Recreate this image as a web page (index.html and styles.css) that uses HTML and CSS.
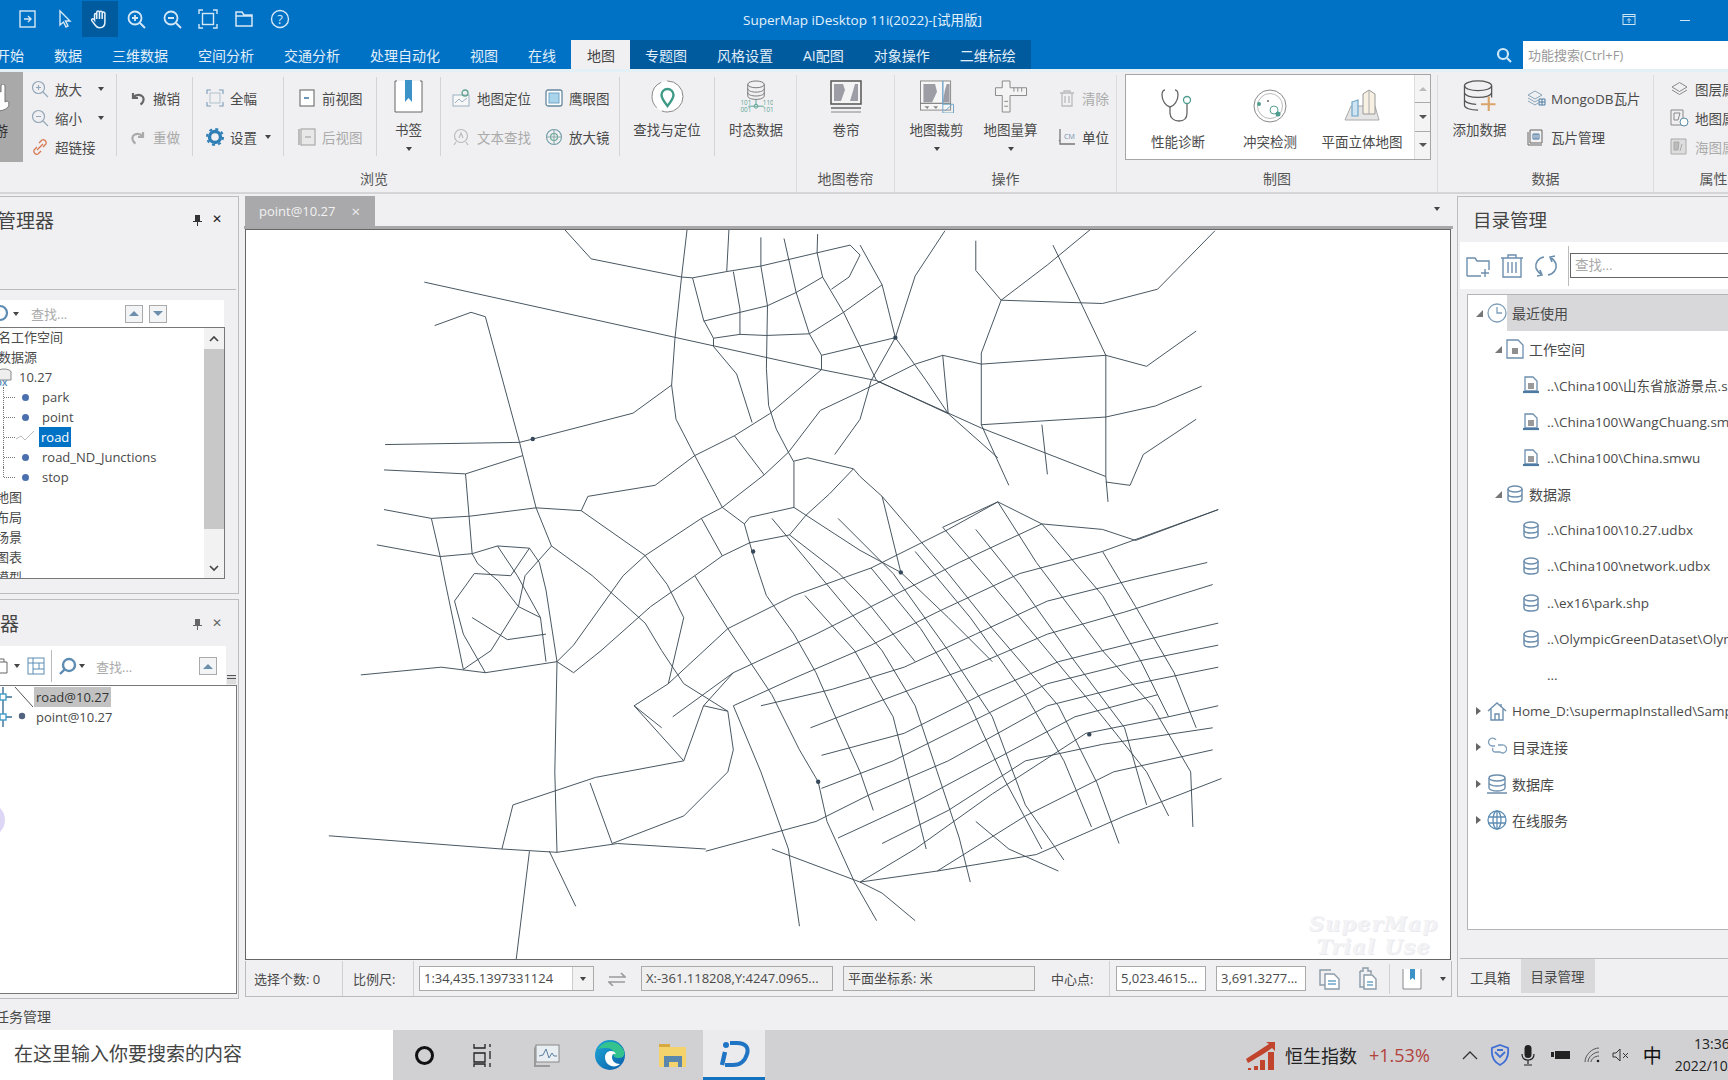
FILE: index.html
```html
<!DOCTYPE html>
<html lang="zh">
<head>
    <meta charset="UTF-8">
    <title>SuperMap iDesktop 11i(2022)</title>
    <link rel="stylesheet" href="styles.css">
</head>
<body>
    <svg class="defs" width="0" height="0">
        <symbol id="db" viewBox="0 0 18 18"><ellipse cx="9" cy="4" rx="7" ry="3" fill="none" stroke="#6d8fae" stroke-width="1.5"/><path d="M2 4v10c0 2 3 3 7 3s7-1 7-3V4M2 9c0 2 3 3 7 3s7-1 7-3" fill="none" stroke="#6d8fae" stroke-width="1.5"/></symbol>
        <symbol id="wfile" viewBox="0 0 18 18"><path d="M3 1h8l4 4v10H3z" fill="#fff" stroke="#6d8fae" stroke-width="1.3"/><rect x="6" y="7" width="6" height="6" fill="#9a9a9a"/><path d="M1 16h16" stroke="#4d7aa3" stroke-width="2.2"/></symbol>
        <symbol id="tri-down" viewBox="0 0 10 10"><path d="M2 3h6L5 7z" fill="#444"/></symbol>
    </svg>

    <div class="titlebar">
        <div class="quick">
            <span class="qbtn"><svg width="22" height="22" viewBox="0 0 22 22" fill="none" stroke="#d6e8f6" stroke-width="1.4"><rect x="3" y="3" width="15" height="16"/><path d="M7 11h7M11 8l3 3-3 3"/></svg></span>
            <span class="qbtn"><svg width="22" height="22" viewBox="0 0 22 22" fill="none" stroke="#d6e8f6" stroke-width="1.4"><path d="M7 3v14l3.500-3 2.500 5 2-1-2.500-5H17z"/></svg></span>
            <span class="qbtn on"><svg width="24" height="24" viewBox="0 0 22 22" fill="none" stroke="#e6f1fa" stroke-width="1.4"><path d="M6 12V7a1 1 0 0 1 2 0V5a1 1 0 0 1 2.500 0a1 1 0 0 1 2.500 0.500a1 1 0 0 1 2.500 1V14c0 3-2 5-5 5-2 0-3-1-4-2.500L3.500 12.500c-.8-1.500 1-2.500 2.500-.5zM8 7v4M10.500 5v6M13 5.500V11"/></svg></span>
            <span class="qbtn"><svg width="22" height="22" viewBox="0 0 22 22" fill="none" stroke="#d6e8f6" stroke-width="1.8"><circle cx="10" cy="10" r="6.500"/><path d="M15 15l5 5M7 10h6M10 7v6"/></svg></span>
            <span class="qbtn"><svg width="22" height="22" viewBox="0 0 22 22" fill="none" stroke="#d6e8f6" stroke-width="1.8"><circle cx="10" cy="10" r="6.500"/><path d="M15 15l5 5M7 10h6"/></svg></span>
            <span class="qbtn"><svg width="22" height="22" viewBox="0 0 22 22" fill="none" stroke="#d6e8f6" stroke-width="1.4"><rect x="5.500" y="5.500" width="11" height="11"/><path d="M2 6V2h4M16 2h4v4M20 16v4h-4M6 20H2v-4"/></svg></span>
            <span class="qbtn"><svg width="22" height="22" viewBox="0 0 22 22" fill="none" stroke="#d6e8f6" stroke-width="1.5"><path d="M3 18V4h6l2 3h8v11zM3 8h16"/></svg></span>
            <span class="qbtn"><svg width="22" height="22" viewBox="0 0 22 22" fill="none" stroke="#d6e8f6" stroke-width="1.4"><circle cx="11" cy="11" r="8.500"/><text x="11" y="15.500" text-anchor="middle" font-size="13" fill="#d6e8f6" stroke="none">?</text></svg></span>
        </div>
        <div class="apptitle">SuperMap iDesktop 11i(2022)-[试用版]</div>
        <div class="winbtns">
            <svg width="14" height="14" viewBox="0 0 14 14" fill="none" stroke="#cfe5f5"><rect x="1" y="1.500" width="12" height="10"/><path d="M1 3.500h12M7 10V6M5 7.500l2-2 2 2"/></svg>
            <span class="minbtn"></span>
        </div>
    </div>

    <div class="tabbar">
        <span class="tab first">开始</span>
        <span class="tab">数据</span>
        <span class="tab">三维数据</span>
        <span class="tab">空间分析</span>
        <span class="tab">交通分析</span>
        <span class="tab">处理自动化</span>
        <span class="tab">视图</span>
        <span class="tab">在线</span>
        <span class="tab active">地图</span>
        <div class="tabs-context">
            <span class="tab">专题图</span>
            <span class="tab">风格设置</span>
            <span class="tab">AI配图</span>
            <span class="tab">对象操作</span>
            <span class="tab">二维标绘</span>
        </div>
        <div class="funcsearch">
            <svg class="fs-icon" width="16" height="16" viewBox="0 0 16 16" fill="none" stroke="#cfe8f8" stroke-width="2.200"><circle cx="7" cy="7" r="5"/><path d="M11 11l4 4"/></svg>
            <span class="fs-input">功能搜索(Ctrl+F)</span>
        </div>
    </div>

    <div class="ribbon">
        <!-- 浏览 -->
        <div class="rgroup g-browse">
            <div class="rbody">
                <div class="rcol c-hand">
                    <div class="handbtn">
                        <svg width="14" height="30" viewBox="0 0 14 30"><path d="M-6 12a2 2 0 0 1 4 0V8a2 2 0 0 1 3 0V2a2 2 0 0 1 4 0v16l2-1c3 0 2 6 0 7-2 2-6 3-10 3s-3 0-3-3z" fill="#fff" stroke="#777"/></svg>
                        <span class="hand-label">漫游</span>
                    </div>
                </div>
                <div class="rcol rows3 c-zoom">
                    <div class="ritem"><svg width="18" height="18" viewBox="0 0 18 18" fill="none" stroke="#93a7b8" stroke-width="1.200"><circle cx="7.500" cy="7.500" r="6"/><path d="M12 12l5 5M5 7.500h5M7.500 5v5"/></svg><span class="lbl">放大</span><svg class="car" width="10" height="10"><use href="#tri-down"/></svg></div>
                    <div class="ritem"><svg width="18" height="18" viewBox="0 0 18 18" fill="none" stroke="#93a7b8" stroke-width="1.200"><circle cx="7.500" cy="7.500" r="6"/><path d="M12 12l5 5M5 7.500h5"/></svg><span class="lbl">缩小</span><svg class="car" width="10" height="10"><use href="#tri-down"/></svg></div>
                    <div class="ritem"><svg width="18" height="18" viewBox="0 0 18 18" fill="none" stroke="#d6764f" stroke-width="1.300"><path d="M8 5l3-3c2-1 5 1 4 4l-3 3M10 13l-3 3c-2 1-5-1-4-4l3-3M6 12l6-6"/></svg><span class="lbl">超链接</span></div>
                </div>
                <div class="rcol rows2 c-undo">
                    <div class="ritem"><svg width="18" height="18" viewBox="0 0 18 18" fill="none" stroke="#666" stroke-width="2.200"><path d="M4 4v5h5M4.500 8.500C7 5 12 5 14 8c1.500 2.500 0 6-2.500 7.500"/></svg><span class="lbl">撤销</span></div>
                    <div class="ritem dis"><svg width="18" height="18" viewBox="0 0 18 18" fill="none" stroke="#aaa" stroke-width="2.200"><path d="M14 4v5H9M13.500 8.500C11 5 6 5 4 8c-1.500 2.500 0 6 2.500 7.500"/></svg><span class="lbl">重做</span></div>
                </div>
                <div class="rcol rows2 c-full">
                    <div class="ritem"><svg width="18" height="18" viewBox="0 0 18 18" fill="none" stroke="#7a9cb8" stroke-width="1.100"><rect x="4" y="4" width="10" height="10" stroke="#b8c6d2"/><path d="M1 5V1h4M13 1h4v4M17 13v4h-4M5 17H1v-4"/></svg><span class="lbl">全幅</span></div>
                    <div class="ritem"><svg width="18" height="18" viewBox="0 0 18 18"><circle cx="9" cy="9" r="5.500" fill="none" stroke="#2f7fb6" stroke-width="3.400"/><circle cx="9" cy="9" r="8" fill="none" stroke="#2f7fb6" stroke-width="2" stroke-dasharray="3 3.300"/></svg><span class="lbl">设置</span><svg class="car" width="10" height="10"><use href="#tri-down"/></svg></div>
                </div>
                <div class="rcol rows2 c-views">
                    <div class="ritem"><svg width="18" height="18" viewBox="0 0 18 18" fill="none" stroke="#777" stroke-width="1.200"><rect x="2" y="1" width="14" height="16" fill="#fff"/><path d="M6 9h5" stroke="#4c7ca3" stroke-width="1.600"/></svg><span class="lbl">前视图</span></div>
                    <div class="ritem dis"><svg width="18" height="18" viewBox="0 0 18 18" fill="none" stroke="#aaa" stroke-width="1.200"><rect x="3" y="1" width="14" height="16" fill="#e8e8e8"/><path d="M1 1v16M7 9h6" stroke="#999"/></svg><span class="lbl">后视图</span></div>
                </div>
                <div class="rcol rlarge c-book">
                    <svg class="bigicon" width="29" height="33" viewBox="0 0 29 33"><path d="M1 1v31h27V1" fill="#fff" stroke="#666"/><path d="M1 1h2M26 1h2" stroke="#666"/><path d="M11 0h7v22l-3.500-4L11 22z" fill="#3d93c7"/></svg>
                    <span class="lbl">书签</span>
                    <svg class="car" width="10" height="10"><use href="#tri-down"/></svg>
                </div>
                <div class="rcol rows2 c-loc">
                    <div class="ritem"><svg width="19" height="18" viewBox="0 0 19 18" fill="none" stroke="#9ab0c0"><rect x="1" y="6" width="16" height="11" fill="#f7f7f7"/><path d="M3 14l4-4 3 3 5-4"/><circle cx="13" cy="4" r="3" stroke="#5fa38f" stroke-width="1.300"/></svg><span class="lbl">地图定位</span></div>
                    <div class="ritem dis"><svg width="19" height="18" viewBox="0 0 19 18" fill="none" stroke="#bbb" stroke-width="1.200"><circle cx="9" cy="8" r="6.500"/><path d="M4 14l-2 3M14 14l2 3M7 10l2-5 2 5"/></svg><span class="lbl">文本查找</span></div>
                </div>
                <div class="rcol rows2 c-eye">
                    <div class="ritem"><svg width="18" height="18" viewBox="0 0 18 18"><rect x="1" y="1" width="16" height="16" rx="2" fill="#fff" stroke="#66879f" stroke-width="1.300"/><rect x="4" y="4" width="10" height="10" fill="#a9d4ec" stroke="#6fa5c7"/></svg><span class="lbl">鹰眼图</span></div>
                    <div class="ritem"><svg width="18" height="18" viewBox="0 0 18 18" fill="none" stroke="#6f9aa8" stroke-width="1.100"><circle cx="9" cy="9" r="7.500"/><circle cx="9" cy="9" r="3.500" stroke="#5fa38f"/><path d="M9 1v16M1 9h16" stroke="#8aa"/></svg><span class="lbl">放大镜</span></div>
                </div>
                <div class="rcol rlarge c-find">
                    <svg class="bigicon" width="35" height="33" viewBox="0 0 35 33"><circle cx="17.500" cy="16.500" r="15.500" fill="#fff" stroke="#888" stroke-dasharray="30 6"/><path d="M17.500 26c-4-5-6-8-6-11a6 6 0 0 1 12 0c0 3-2 6-6 11z" fill="none" stroke="#3e9a86" stroke-width="2.400"/></svg>
                    <span class="lbl">查找与定位</span>
                </div>
                <div class="rcol rlarge c-time last">
                    <svg class="bigicon" width="34" height="34" viewBox="0 0 34 34" fill="none"><ellipse cx="17" cy="4.500" rx="8.500" ry="3.500" stroke="#777"/><path d="M8.500 4.500v12c0 2 4 3.500 8.500 3.500s8.500-1.500 8.500-3.500v-12M8.500 9c0 2 4 3.500 8.500 3.500s8.500-1.500 8.500-3.500M8.500 13c0 2 4 3.500 8.500 3.500s8.500-1.500 8.500-3.500" stroke="#777"/><path d="M17 20v5M9 27h16" stroke="#5aa394"/><circle cx="17" cy="27" r="2" stroke="#5aa394"/><text x="1" y="26" font-size="6.500" fill="#5aa394">101</text><text x="24" y="26" font-size="6.500" fill="#5aa394">110</text><text x="1" y="33" font-size="6.500" fill="#5aa394">001</text><text x="24" y="33" font-size="6.500" fill="#5aa394">101</text></svg>
                    <span class="lbl">时态数据</span>
                </div>
            </div>
            <div class="rlabel">浏览</div>
        </div>

        <!-- 地图卷帘 -->
        <div class="rgroup g-swipe">
            <div class="rbody">
                <div class="rcol rlarge c-swipe last">
                    <svg class="bigicon" width="32" height="33" viewBox="0 0 32 33"><rect x="1" y="1" width="30" height="23" fill="#f4f4f4" stroke="#555" stroke-width="1.500"/><path d="M4 4h9l2 6-4 11H4zM20 21l3-10 2-7h3v17z" fill="#9d9da6"/><path d="M1 28h30" stroke="#666" stroke-width="1.500"/><path d="M1 32h30" stroke="#aaa" stroke-width="1.500"/></svg>
                    <span class="lbl">卷帘</span>
                </div>
            </div>
            <div class="rlabel">地图卷帘</div>
        </div>

        <!-- 操作 -->
        <div class="rgroup g-oper">
            <div class="rbody">
                <div class="rcol rlarge c-clip">
                    <svg class="bigicon" width="36" height="34" viewBox="0 0 36 34"><rect x="1" y="1" width="31" height="30" fill="#f6f6f6" stroke="#888"/><path d="M4 4h12l2 8-5 11H4zM24 23l2-12 2-7h3v19z" fill="#9d9da6"/><path d="M1 24h31" stroke="#666"/><path d="M5 27h5l-2 3zM14 27h5l-2 3z" fill="#888"/><path d="M24 1v24h11v9H24z" fill="none" stroke="#6fa5c7"/><path d="M26 32l7-6" stroke="#6fa5c7"/></svg>
                    <span class="lbl">地图裁剪</span>
                    <svg class="car" width="10" height="10"><use href="#tri-down"/></svg>
                </div>
                <div class="rcol rlarge c-measure">
                    <svg class="bigicon" width="34" height="34" viewBox="0 0 34 34" fill="#f4f4f4" stroke="#888"><path d="M8 1h8v7h17v8H16v17H8V16H1V8h7z"/><path d="M20 8v4M24 8v4M28 8v4M10 22h4M10 27h4" fill="none"/></svg>
                    <span class="lbl">地图量算</span>
                    <svg class="car" width="10" height="10"><use href="#tri-down"/></svg>
                </div>
                <div class="rcol rows2 c-clear last">
                    <div class="ritem dis"><svg width="18" height="18" viewBox="0 0 18 18" fill="none" stroke="#bbb" stroke-width="1.300"><path d="M2 4h14M6 4V2h6v2M4 4v13h10V4M7 7v7M11 7v7"/></svg><span class="lbl">清除</span></div>
                    <div class="ritem"><svg width="18" height="18" viewBox="0 0 18 18" fill="none" stroke="#777"><path d="M2 1v15h15M2 12l-1 1" stroke-width="1.300"/><text x="6" y="11" font-size="7" fill="#6d8fae" stroke="none">CM</text></svg><span class="lbl">单位</span></div>
                </div>
            </div>
            <div class="rlabel">操作</div>
        </div>

        <!-- 制图 -->
        <div class="rgroup g-carto">
            <div class="rbody">
                <div class="gallery">
                    <div class="gal-item">
                        <svg width="36" height="36" viewBox="0 0 36 36" fill="none" stroke="#666" stroke-width="1.300"><path d="M5 2c-2 0-3 2-3 5 0 6 4 11 8 12 4-1 8-6 8-12 0-3-1-5-3-5"/><path d="M10 19v6c0 5 4 8 9 8s8-3 8-8v-9"/><circle cx="27" cy="12" r="3.500" stroke="#4f9d8f"/></svg>
                        <span>性能诊断</span>
                    </div>
                    <div class="gal-item">
                        <svg width="36" height="36" viewBox="0 0 36 36" fill="none" stroke="#888"><circle cx="18" cy="18" r="16"/><circle cx="18" cy="18" r="12.500" stroke="#bbb"/><circle cx="22" cy="22" r="4" stroke="#5aa394"/><circle cx="7" cy="16" r="2" fill="#4f9d8f" stroke="none"/><circle cx="26" cy="26" r="2.500" fill="#4f9d8f" stroke="none"/><circle cx="16" cy="13" r="1" fill="#666" stroke="none"/></svg>
                        <span>冲突检测</span>
                    </div>
                    <div class="gal-item">
                        <svg width="36" height="36" viewBox="0 0 36 36" fill="none" stroke="#aaa"><path d="M1 32l6-14h24l4 14z" fill="#e5e5e5"/><path d="M8 14l6-2v16H8z" fill="#cfe5f3" stroke="#6fa5c7" stroke-width="1.200"/><path d="M19 6l6-4 6 4v20H19z" fill="#f7f0e3" stroke="#999"/><path d="M25 2v24"/></svg>
                        <span>平面立体地图</span>
                    </div>
                    <div class="gal-scroll">
                        <span class="gs up"><i></i></span>
                        <span class="gs down"><i></i></span>
                        <span class="gs more"><i></i></span>
                    </div>
                </div>
            </div>
            <div class="rlabel">制图</div>
        </div>

        <!-- 数据 -->
        <div class="rgroup g-data">
            <div class="rbody">
                <div class="rcol rlarge c-add">
                    <svg class="bigicon" width="36" height="34" viewBox="0 0 36 34" fill="none" stroke="#555" stroke-width="1.300"><ellipse cx="16" cy="6" rx="14" ry="5"/><path d="M2 6v20c0 3 6 5 14 5M30 6v12M2 13c0 3 6 5 14 5s14-2 14-5M2 20c0 3 6 5 12 5"/><path d="M27 17v15M19 25h15" stroke="#d9a36a" stroke-width="2.200"/></svg>
                    <span class="lbl">添加数据</span>
                </div>
                <div class="rcol rows2 c-tile last">
                    <div class="ritem"><svg width="19" height="18" viewBox="0 0 19 18" fill="none" stroke="#8aa5ba"><path d="M1 6l7-4 7 4-7 4zM1 9l7 4 3-2M1 12l7 4 3-2"/><path d="M12 10h6v6h-6zM15 10v6M12 13h6" stroke="#4d7aa3"/></svg><span class="lbl">MongoDB瓦片</span></div>
                    <div class="ritem"><svg width="19" height="18" viewBox="0 0 19 18" fill="none" stroke="#666"><path d="M3 2h12v13H3zM1 4v13h14"/><path d="M6 6h6v5H6z" stroke="#4d7aa3"/><path d="M8 6v5M10 6v5" stroke="#4d7aa3"/></svg><span class="lbl">瓦片管理</span></div>
                </div>
            </div>
            <div class="rlabel">数据</div>
        </div>

        <!-- 属性 -->
        <div class="rgroup g-prop">
            <div class="rbody">
                <div class="rcol rows3 c-prop">
                    <div class="ritem"><svg width="19" height="18" viewBox="0 0 19 18" fill="none" stroke="#888"><path d="M2 7l7.500-4.500L17 7l-7.500 4.500zM2 10l7.500 4.500L17 10"/></svg><span class="lbl">图层属性</span></div>
                    <div class="ritem"><svg width="19" height="18" viewBox="0 0 19 18" fill="none" stroke="#888"><path d="M1 1h12v15H1zM4 4h6l-2 7H4z"/><circle cx="14" cy="13" r="4" fill="#fff" stroke="#5a8ca8"/></svg><span class="lbl">地图属性</span></div>
                    <div class="ritem dis"><svg width="19" height="18" viewBox="0 0 19 18" fill="#ddd" stroke="#aaa"><path d="M1 1h15v15H1z"/><path d="M4 4h5l-1 8H4zM12 6l-2 7" fill="#bbb"/></svg><span class="lbl">海图属性</span></div>
                </div>
            </div>
            <div class="rlabel">属性</div>
        </div>
    </div>

    <div class="workspace">
        <div class="leftcol">
            <div class="panel p-workspace">
                <div class="panel-head">
                    <span class="panel-title wm-title">工作空间管理器</span>
                    <span class="pin"><svg width="11" height="12" viewBox="0 0 11 12" fill="#333"><path d="M3 1h5v6h2v1H6v4H5V8H1V7h2z"/></svg></span>
                    <span class="close">✕</span>
                </div>
                <div class="mini-toolbar wm-tools">
                    <svg class="cut-ic" width="10" height="20" viewBox="0 0 10 20" fill="none" stroke="#5d8cb3" stroke-width="2.200"><circle cx="0" cy="9" r="7"/></svg>
                    <svg class="tool-car" width="10" height="10"><use href="#tri-down"/></svg>
                    <span class="find-hint">查找...</span>
                    <span class="arrowbtn"><i class="up"></i></span>
                    <span class="arrowbtn"><i class="dn"></i></span>
                </div>
                <div class="treebox wm-tree">
                    <div class="treerows">
                        <div class="trow clip28">未命名工作空间</div>
                        <div class="trow clip2">数据源</div>
                        <div class="trow ds"><svg class="ds-ic" width="20" height="20" viewBox="0 0 20 20"><ellipse cx="6" cy="5" rx="7" ry="3" fill="#eee" stroke="#888"/><path d="M-1 5v8h14V5" fill="#eee" stroke="#888"/><text x="-2" y="19" font-size="8" font-weight="bold" fill="#5d8cb3">DX</text></svg>10.27</div>
                        <div class="trow child"><i class="dots"></i><i class="bullet"></i>park</div>
                        <div class="trow child"><i class="dots"></i><i class="bullet"></i>point</div>
                        <div class="trow child"><i class="dots"></i><svg class="line-ic" width="20" height="14" viewBox="0 0 20 14" fill="none" stroke="#bbb"><path d="M0 9l5-3 4 4 9-9"/></svg><span class="sel">road</span></div>
                        <div class="trow child"><i class="dots"></i><i class="bullet"></i>road_ND_Junctions</div>
                        <div class="trow child"><i class="dots end"></i><i class="bullet"></i>stop</div>
                        <div class="trow clip14">地图</div>
                        <div class="trow clip14">布局</div>
                        <div class="trow clip14">场景</div>
                        <div class="trow clip14">图表</div>
                        <div class="trow clip14">模型</div>
                    </div>
                    <div class="vscroll">
                        <span class="chev"><svg width="12" height="8" viewBox="0 0 12 8" fill="none" stroke="#444" stroke-width="1.600"><path d="M2 6l4-4 4 4"/></svg></span>
                        <span class="thumb"></span>
                        <span class="chev"><svg width="12" height="8" viewBox="0 0 12 8" fill="none" stroke="#444" stroke-width="1.600"><path d="M2 2l4 4 4-4"/></svg></span>
                    </div>
                </div>
            </div>
            <div class="panel p-layers">
                <div class="panel-head short">
                    <span class="panel-title lm-title">图层管理器</span>
                    <span class="pin dim"><svg width="11" height="12" viewBox="0 0 11 12" fill="#666"><path d="M3 1h5v6h2v1H6v4H5V8H1V7h2z"/></svg></span>
                    <span class="close dim">✕</span>
                </div>
                <div class="mini-toolbar lm-tools">
                    <svg class="doc-ic" width="9" height="18" viewBox="0 0 9 18" fill="none" stroke="#666"><path d="M-3 5h10v11H-3zM0 2h4v3"/></svg>
                    <svg class="tool-car" width="10" height="10"><use href="#tri-down"/></svg>
                    <svg class="grid-ic" width="18" height="18" viewBox="0 0 18 18" fill="none" stroke="#5d8cb3"><rect x="1" y="1" width="16" height="16"/><path d="M1 6h16M6 1v16M6 12h11M12 6v6"/></svg>
                    <i class="tool-sep"></i>
                    <svg class="lens-ic" width="19" height="19" viewBox="0 0 19 19" fill="none" stroke="#5d8cb3" stroke-width="2.400"><circle cx="11" cy="8" r="6"/><path d="M6.500 12.500L2 17"/></svg>
                    <svg class="tool-car" width="10" height="10"><use href="#tri-down"/></svg>
                    <span class="find-hint">查找...</span>
                    <span class="arrowbtn"><i class="up"></i></span>
                    <span class="overflow-btn"></span>
                </div>
                <div class="treebox lm-tree">
                    <div class="layer-row"><svg class="crosshair" width="14" height="20" viewBox="0 0 14 20" fill="none" stroke="#3b6f95" stroke-width="1.400"><path d="M3 0v20M-4 10h16"/><rect x="0" y="7" width="6" height="6" stroke="#3f9bc8" fill="#fff"/></svg><svg class="lineswatch" width="20" height="20" viewBox="0 0 20 20" stroke="#555"><path d="M1 0l18 20"/></svg><span class="hl">road@10.27</span></div>
                    <div class="layer-row"><svg class="crosshair" width="14" height="20" viewBox="0 0 14 20" fill="none" stroke="#3b6f95" stroke-width="1.400"><path d="M3 0v20M-4 10h16"/><rect x="0" y="7" width="6" height="6" stroke="#3f9bc8" fill="#fff"/></svg><svg class="lineswatch" width="20" height="20" viewBox="0 0 20 20"><circle cx="8" cy="9" r="3.200" fill="#52637f"/></svg><span class="pad">point@10.27</span></div>
                    <span class="float-ball"></span>
                </div>
            </div>
        </div>

        <div class="doccol">
            <div class="doctabs">
                <span class="doctab">point@10.27<span class="x">×</span></span>
                <svg class="doc-car" width="10" height="10"><use href="#tri-down"/></svg>
            </div>
            <div class="map">
                <svg class="roads" width="1204" height="729" viewBox="222.800 208.300 1092.500 661.500">
                    <path fill="none" stroke="#3c4b56" stroke-width="0.850" d="
                    M384.600 255.600L745 335L795 345L890 388L1003 432
                    M394 295L427 283L440 287L471 401L474 413L486 460.400L500 495L537 522L585 565L600 590L620 620L660 645
                    M349 403L471 401L483 398L574 374.500L609 349
                    M623 208L618 251L612 307L609 349L613 380L630 413L655 460L675 475L682 500L689 522L695 540L720 575L740 610L762 660L780 700L792 735
                    M512 208L536 234.500L618 251L628 251.700L659 246L690 241L741 229L771 222L780 231L770 251L754 262
                    M661 208L659 246
                    M690 215L690 241L696 277L695 334L697 367.500L704 389L715 410L720 419L720 460
                    M628 251.700L638 290L647 306.500L647 314L668 339L682 383
                    M665 246L671 280L671 303
                    M638 291L696 277L722 265L746 251
                    M647 306.500L671 303L695 304L734 302.500
                    M711 216L722 265L734 302.500L745 322L745 335L698 375L666 395L630 413L594 440L533 450L527 463L486 460.400L426 468L391 470L348 462
                    M741.500 212L741 229L746 251L765 283L795 345L860 375L905 415
                    M734 302.500L765 283L800 258
                    M745 322L812 306
                    M780 355L744 372L715 410L693 430.500L655 460L636 470L585 503.700L565 522L520 585L505 600
                    M666 395L693 430.500
                    M348 426L422 429.600L474 413
                    M422 429.600L428 502L433 511L452 527L470 550L490 560L495 600
                    M341.500 494L399 504.600L428 502L451 495L480 497L489 510L495 535L505 600
                    M391 470L399 504.600L403 525L420 607
                    M527 463L585 503.700L605 530L620 560L606 620L575 640L600 660
                    M500 495L476 522L470 550L445 590L420 607
                    M451 495L469 522L490 560
                    M480 497L463 522L430 520L412 545L420 575L440 610
                    M428 560L460 580L495 575
                    M720 418L732.500 415L774 425L780 432L800 450L817 519
                    M774 425L752 448L731 467L716 485L680 492L655 504L630 522L590 550L545 590L520 610L505 600L503 700L505 773
                    M675 475L680 469L720 460L780 499L817 519L860 560L900 600
                    M636 470L655 504
                    M716 485L760 519L790 550L830 600
                    M780 355L830 330L855 322L890 330L1003 322L1040 332L1085 300
                    M780 222L800 258L812 306L840 345L860 375L855 322
                    M857 209L830 250L812 306L790 345L780 380L757 412
                    M885 218L885 245L908 272L890 320L890 385L915 440
                    M955 222L975 263L1003 322L1003 378L1003 432L1005 455
                    M1102 209L1050 262L1000 275L908 272
                    M990 207L950 240L908 272
                    M1090 350L1048 368L1003 378L890 385
                    M1085 380L1037 412L1025 440L1003 437
                    M945 385L950 430
                    M905 455L945 475L1000 480L1030 490L1105 462
                    M855 478L905 455
                    M606 620L660 570L720 540L790 515L860 480L905 455
                    M610 650L665 610L740 575L800 545L870 510L945 475
                    M665 640L720 615L790 585L850 555L925 520L1000 500L1105 462
                    M690 640L755 625L820 605L885 575L950 545L1030 525L1095 510
                    M735 660L800 635L880 605L950 575L1020 555L1100 530
                    M745 685L820 665L890 630L960 600L1040 580L1105 565
                    M745 715L810 690L880 655L950 620L1030 600L1105 585
                    M640 772L740 745L790 720L860 690L950 640L1030 620L1105 605
                    M760 760L825 730L900 690L975 650L1050 630
                    M780 800L830 770L900 720L985 665L1060 650L1105 640
                    M800 765L860 735L930 690L1000 675L1100 660
                    M780 800L850 790L930 740L1010 700L1100 680
                    M850 790L940 775L1020 740L1108 706
                    M700 470L750 530L800 590L830 640L850 700L870 760L880 800
                    M730 540L775 590L810 650L825 710L840 770
                    M760 470L810 520L860 590L900 650L930 730L965 780
                    M790 515L835 570L880 640L910 705L945 770
                    M800 450L860 520L900 570L960 640L995 710L1015 765
                    M830 500L880 560L930 630L965 690L990 750
                    M855 478L900 530L950 590L1000 650L1040 700L1060 740
                    M885 480L925 530L975 600L1020 660L1040 730
                    M905 455L940 510L1000 590L1045 640L1080 700L1082 750
                    M945 475L1000 540L1035 600L1060 650
                    M1000 500L1030 550L1065 610L1085 660
                    M630 522L660 570L680 600L700 630L725 680L742 709L750 745L775 800L795 835
                    M665 640L690 700L715 770L725 840
                    M298 758L455 770L465 730L540 705L620 690L638 640L665 610
                    M455 770L505 773L560 765L640 770
                    M535 710L555 765
                    M480 772L468 870
                    M498 772L522 822
                    M327 612L400 605L440 610L505 600
                    M575 640L620 690
                    M638 640L660 645L665 680L660 700L620 740L555 765
                    M700 770L780 800L800 810L830 835
                    M885 745L915 770L960 790
                    "/>
                    <g fill="#35495a">
                        <circle cx="483" cy="398" r="2"/>
                        <circle cx="812" cy="306" r="2"/>
                        <circle cx="683" cy="500" r="2"/>
                        <circle cx="817" cy="519" r="2"/>
                        <circle cx="988" cy="666" r="2"/>
                        <circle cx="742" cy="709" r="2"/>
                    </g>
                </svg>
                <div class="watermark">SuperMap<br>Trial Use</div>
            </div>
            <div class="statusbar">
                <span class="st-cell st-count">选择个数: 0</span>
                <span class="st-cell st-scale">比例尺:</span>
                <span class="combo"><span class="combo-text">1:34,435.1397331124</span><span class="combo-btn"><svg width="10" height="10"><use href="#tri-down"/></svg></span></span>
                <svg class="swap" width="18" height="14" viewBox="0 0 18 14" fill="none" stroke="#999" stroke-width="1.600"><path d="M1 5h16l-4-4M17 10H1l4 4"/></svg>
                <span class="field f-coord">X:-361.118208,Y:4247.0965...</span>
                <span class="field f-crs">平面坐标系: 米</span>
                <span class="st-cell st-center">中心点:</span>
                <span class="field f-num f-x">5,023.4615...</span>
                <span class="field f-num f-y">3,691.3277...</span>
                <svg class="st-ic copy" width="24" height="24" viewBox="0 0 24 24" fill="none" stroke="#8a9aa8" stroke-width="1.400"><path d="M14 3H3v15h5"/><path d="M8 7h9l5 5v10H8z" fill="#fff"/><path d="M11 14h8M11 17h8" stroke="#6fa5c7"/></svg>
                <svg class="st-ic paste" width="24" height="24" viewBox="0 0 24 24" fill="none" stroke="#8a9aa8" stroke-width="1.400"><path d="M6 4h3V1h5v3h3v3M6 4v16h4"/><path d="M10 8h8l4 4v10H10z" fill="#fff"/><path d="M13 15h6M13 18h6" stroke="#6fa5c7"/></svg>
                <i class="st-sep"></i>
                <svg class="st-ic mark" width="20" height="22" viewBox="0 0 20 22"><path d="M1 1v20h18V1" fill="#fff" stroke="#888"/><path d="M8 1h5v11l-2.500-2L8 12z" fill="#3d93c7"/></svg>
                <svg class="st-car" width="10" height="10"><use href="#tri-down"/></svg>
            </div>
        </div>

        <div class="rightcol">
            <div class="panel-title cat-title">目录管理</div>
            <div class="cat-tools">
                <svg width="24" height="24" viewBox="0 0 24 24" fill="none" stroke="#6d8fae" stroke-width="1.400"><path d="M1 22V4h8l2 3h12v9M1 22h14M19 15v8M15 19h8"/></svg>
                <svg width="24" height="24" viewBox="0 0 24 24" fill="none" stroke="#6d8fae" stroke-width="1.400"><path d="M1 4h22M8 4V1h8v3M3 4v19h18V4M8 8v11M12 8v11M16 8v11"/></svg>
                <svg width="24" height="24" viewBox="0 0 24 24" fill="none" stroke="#6d8fae" stroke-width="1.600"><path d="M10 3C4 4 1 9 2 14c1 3 3 5 6 7M6 16l2 5-5 1M14 21c6-1 9-6 8-11-1-3-3-5-6-7M18 8l-2-5 5-1"/></svg>
                <i class="cat-sep"></i>
                <span class="cat-search">查找...</span>
            </div>
            <div class="cat-tree">
                <div class="crow top hl-row"><i class="tw open"></i><svg width="20" height="20" viewBox="0 0 20 20" fill="none" stroke="#7f9fba" stroke-width="1.300"><circle cx="10" cy="10" r="9"/><path d="M10 4v6h5"/></svg><span class="big">最近使用</span></div>
                <div class="crow l2"><i class="tw open"></i><svg width="18" height="20" viewBox="0 0 18 20" fill="none" stroke="#6d8fae" stroke-width="1.300"><path d="M1 1h11l5 5v13H1z"/><rect x="6" y="9" width="6" height="6" fill="#8f8f8f" stroke="none"/></svg><span class="big">工作空间</span></div>
                <div class="crow l3"><svg width="18" height="18"><use href="#wfile"/></svg><span>..\China100\山东省旅游景点.smwu</span></div>
                <div class="crow l3"><svg width="18" height="18"><use href="#wfile"/></svg><span>..\China100\WangChuang.smwu</span></div>
                <div class="crow l3"><svg width="18" height="18"><use href="#wfile"/></svg><span>..\China100\China.smwu</span></div>
                <div class="crow l2"><i class="tw open"></i><svg width="18" height="18"><use href="#db"/></svg><span class="big">数据源</span></div>
                <div class="crow l3"><svg width="18" height="18"><use href="#db"/></svg><span>..\China100\10.27.udbx</span></div>
                <div class="crow l3"><svg width="18" height="18"><use href="#db"/></svg><span>..\China100\network.udbx</span></div>
                <div class="crow l3"><svg width="18" height="18"><use href="#db"/></svg><span>..\ex16\park.shp</span></div>
                <div class="crow l3"><svg width="18" height="18"><use href="#db"/></svg><span>..\OlympicGreenDataset\OlympicGreen.udbx</span></div>
                <div class="crow l3 more"><span>...</span></div>
                <div class="crow top"><i class="tw"></i><svg width="20" height="20" viewBox="0 0 20 20" fill="none" stroke="#6d8fae" stroke-width="1.400"><path d="M1 10l9-8 9 8M4 8v11h12V8M8 19v-6h4v6"/><path d="M14 3v3" /></svg><span>Home_D:\supermapInstalled\SampleData</span></div>
                <div class="crow top"><i class="tw"></i><svg width="20" height="20" viewBox="0 0 20 20" fill="none" stroke="#7f9fba" stroke-width="1.300"><path d="M9 3a4 4 0 1 0-4 6h3M11 8h4a4 4 0 1 1-2 7H8c-2 0-3-2-2-4"/></svg><span class="big">目录连接</span></div>
                <div class="crow top"><i class="tw"></i><svg width="20" height="20" viewBox="0 0 20 20" fill="none" stroke="#6d8fae" stroke-width="1.400"><ellipse cx="10" cy="4" rx="8" ry="3"/><path d="M2 4v10c0 1.500 4 3 8 3s8-1.500 8-3V4M2 9c0 1.500 4 3 8 3s8-1.500 8-3M0 19h20"/></svg><span class="big">数据库</span></div>
                <div class="crow top"><i class="tw"></i><svg width="20" height="20" viewBox="0 0 20 20" fill="none" stroke="#5d8cb3" stroke-width="1.300"><circle cx="10" cy="10" r="9"/><ellipse cx="10" cy="10" rx="4" ry="9"/><path d="M1 7h18M1 13h18M10 1v18"/></svg><span class="big">在线服务</span></div>
            </div>
            <div class="cat-bottom">
                <span class="btab">工具箱</span>
                <span class="btab on">目录管理</span>
            </div>
        </div>
    </div>

    <div class="taskmgr"><span>任务管理</span></div>

    <div class="taskbar">
        <div class="ts-search">在这里输入你要搜索的内容</div>
        <span class="ts-cortana"></span>
        <svg class="ts-view" width="20" height="24" viewBox="0 0 20 24" fill="none" stroke="#222" stroke-width="1.300"><path d="M1 1v4h11V1M1 10h11v9H1zM1 24v-3h11v3M17 1v3M17 8v8M17 20v4"/></svg>
        <svg class="ts-mon" width="28" height="26" viewBox="0 0 28 26"><rect x="3" y="3" width="23" height="17" fill="#e9eef2" stroke="#8a8a8a"/><path d="M6 14l4-1 3-6 3 9 3-5 2 3h3" fill="none" stroke="#5a7fa0"/><path d="M1 6l2-3v20h14v2H1z" fill="#9a9a9a"/></svg>
        <svg class="ts-edge" width="32" height="32" viewBox="0 0 32 32"><defs><linearGradient id="eg" x1="0" y1="0" x2="1" y2="1"><stop offset="0" stop-color="#1fa7d8"/><stop offset="1" stop-color="#0b5ea8"/></linearGradient></defs><circle cx="16" cy="16" r="15" fill="url(#eg)"/><path d="M4 10C9 1 24-1 30 12c1 5-1 7-6 7-6 0-4-4-5-7-3-4-10-3-15-2z" fill="#34c28f"/><path d="M11 18c0-7 9-8 11-3-2-1-4 0-4 3 0 4 3 7 8 7-5 5-15 2-15-7z" fill="#fff"/></svg>
        <svg class="ts-folder" width="29" height="26" viewBox="0 0 29 26"><path d="M1 2h11v3H1z" fill="#d8a93f"/><path d="M1 5h27v20H1z" fill="#f4d36c"/><path d="M6 14h18v11h-4v-5h-9v5H6z" fill="#5c87ad"/></svg>
        <div class="ts-active"><svg width="34" height="30" viewBox="0 0 34 30" fill="none" stroke="#1f74c4" stroke-width="4"><path d="M13 4h7c9 0 12 5 10 11-2 7-7 11-14 11h-8"/><path d="M8 13l-3 13" stroke-width="4.400"/><circle cx="9" cy="6" r="3" fill="#1f74c4" stroke="none"/></svg></div>
        <div class="ts-tray">
            <svg class="tr-chart" width="30" height="30" viewBox="0 0 30 30"><path d="M1 19C7 15 15 10 24 4l-3-2h9v9l-3-3C20 13 10 19 3 23z" fill="#c0452c"/><path d="M3 28h3v2H3zM9 26h4v4H9zM15 20h5v10h-5zM23 12h6v18h-6z" fill="#c0452c"/></svg>
            <span class="tr-name">恒生指数</span>
            <span class="tr-pct">+1.53%</span>
            <svg class="tr-caret" width="16" height="10" viewBox="0 0 16 10" fill="none" stroke="#333" stroke-width="1.300"><path d="M1 9l7-7 7 7"/></svg>
            <svg class="tr-shield" width="20" height="22" viewBox="0 0 20 22" fill="none" stroke="#3f6fd6" stroke-width="1.800"><path d="M10 1l8 3c1 8-2 14-8 17C4 18 1 12 2 4z"/><path d="M5 8l5 5 5-5M7 6h6"/></svg>
            <svg class="tr-mic" width="14" height="22" viewBox="0 0 14 22"><rect x="3.500" y="1" width="7" height="13" rx="3.500" fill="#222"/><path d="M1 10c0 4 2 6 6 6s6-2 6-6M7 16v4M3 21h8" fill="none" stroke="#222" stroke-width="1.200"/></svg>
            <svg class="tr-bat" width="21" height="12" viewBox="0 0 21 12"><path d="M1 3h3v5H1z" fill="#222"/><rect x="5" y="2" width="15" height="8" fill="#222"/></svg>
            <svg class="tr-wifi" width="16" height="16" viewBox="0 0 16 16" fill="none" stroke="#555"><path d="M1 15C1 8 8 1 15 1M4 15c0-5 6-10 11-10M7 15c0-3 4-6 8-6"/><circle cx="14" cy="14" r="1.300" fill="#222" stroke="none"/></svg>
            <svg class="tr-vol" width="18" height="14" viewBox="0 0 18 14" fill="none" stroke="#333"><path d="M1 5h3l4-4v12L4 9H1zM11 5l5 5M16 5l-5 5"/></svg>
            <span class="tr-ime">中</span>
            <div class="tr-clock"><span>13:36</span><span>2022/10/27</span></div>
        </div>
    </div>
</body>
</html>
```

FILE: styles.css
```css
html, body { margin: 0; padding: 0; }
body {
    width: 1728px;
    height: 1080px;
    overflow: hidden;
    display: flex;
    flex-direction: column;
    background: #f0f0f2;
    color: #4a4a4a;
    font-family: "Open Sans", "Noto Sans CJK SC", sans-serif;
    font-size: 13.500px;
}
.defs { position: absolute; }
svg { flex: none; display: block; }
i { display: block; flex: none; }

/* title bar */
.titlebar {
    height: 40px;
    background: #0072c6;
    display: flex;
    align-items: center;
    position: relative;
    flex: none;
}
.quick { display: flex; margin-left: 10px; margin-top: -3px; }
.qbtn { width: 36px; height: 36px; display: flex; align-items: center; justify-content: center; }
.qbtn.on { background: #005a9e; }
.apptitle {
    position: absolute;
    left: 743px;
    top: 9px;
    color: #e4f1fb;
    font-size: 13.500px;
}
.winbtns { margin-left: auto; display: flex; align-items: center; margin-right: 38px; }
.minbtn { display: block; width: 10px; height: 1px; background: #cfe5f5; margin-left: 44px; }

/* tabs */
.tabbar {
    height: 29px;
    background: #0072c6;
    display: flex;
    flex: none;
    color: #e2eff9;
    font-size: 14px;
}
.tab { padding: 0 15px; line-height: 31px; white-space: nowrap; flex: none; }
.tab.first { margin-left: -19px; }
.tab.active { background: #f0f0f2; color: #444; height: 32px; padding: 0 16px; width: 27px; }
.tabs-context { display: flex; background: #005a9e; width: 401px; }
.funcsearch { display: flex; margin-left: auto; align-items: center; }
.fs-icon { margin-right: 11px; margin-top: 1px; }
.fs-input {
    width: 200px;
    height: 28px;
    margin-top: 1px;
    padding-left: 5px;
    line-height: 28px;
    background: #fff;
    color: #999;
    font-size: 13px;
}

/* ribbon */
.ribbon {
    height: 124px;
    flex: none;
    display: flex;
    background: #f0f0f2;
    border-top: 3px solid #e3f0f5;
    box-sizing: border-box;
    border-bottom: 1px solid #d6d6d8;
    font-size: 13.500px;
}
.rgroup { display: flex; flex-direction: column; flex: none; box-sizing: border-box; border-right: 1px solid #dcdcde; margin-top: 3px; }
.rbody { display: flex; height: 79px; margin-top: 2px; }
.rlabel { text-align: center; margin-top: 13px; line-height: 20px; color: #555; font-size: 14px; }
.rcol { display: flex; flex-direction: column; flex: none; box-sizing: border-box; border-right: 1px solid #d4d4d6; }
.rcol.last { border-right: 0; }
.rows2 { padding-top: 1px; }
.rows2 .ritem { height: 39px; }
.rows3 { margin-top: -3px; }
.rows3 .ritem { height: 29px; }
.ritem { display: flex; align-items: center; white-space: nowrap; flex: none; }
.ritem > svg:first-child { margin-right: 6px; }
.ritem .car { margin-left: 6px; }
.dis { color: #aaa; }
.rlarge { align-items: center; padding-top: 3px; }
.rlarge .bigicon { height: 33px; margin-bottom: 7px; }
.rlarge .lbl { line-height: 20px; white-space: nowrap; }
.rlarge .car { margin-top: 4px; }

.g-browse { margin-left: -48px; width: 845px; }
.g-swipe { width: 98px; }
.g-oper { width: 222px; }
.g-carto { width: 321px; }
.g-data { width: 216px; }
.g-prop { width: 120px; }

.c-hand { width: 71px; border-right: 0; }
.handbtn { width: 71px; height: 90px; margin-top: -5px; background: #a9a9a9; position: relative; overflow: hidden; flex: none; }
.handbtn svg { position: absolute; left: 48px; top: 12px; }
.hand-label { position: absolute; left: 29px; top: 48px; color: #333; white-space: nowrap; }
.c-zoom { width: 94px; padding-left: 8px; }
.c-zoom .car { margin-left: 14px; }
.c-undo { width: 76px; padding-left: 12px; }
.c-full { width: 91px; padding-left: 13px; }
.c-views { width: 93px; padding-left: 14px; }
.c-book { width: 64px; }
.c-loc { width: 104px; padding-left: 11px; border-right: 0; }
.c-eye { width: 75px; padding-left: 0; }
.c-find { width: 95px; }
.c-time { width: 82px; }
.c-swipe { width: 98px; }
.c-clip { width: 79px; padding-left: 4px; border-right: 0; }
.c-measure { width: 73px; border-right: 0; }
.c-clear { width: 70px; padding-left: 11px; }
.gallery {
    margin-left: 8px;
    margin-top: -3px;
    width: 306px;
    height: 86px;
    box-sizing: border-box;
    background: #fff;
    border: 1px solid #a6a6a6;
    display: flex;
    position: relative;
    padding-left: 6px;
}
.gal-item { display: flex; flex-direction: column; align-items: center; padding-top: 13px; width: 92px; white-space: nowrap; flex: none; font-size: 13.500px; }
.gal-item span { margin-top: 7px; }
.gal-scroll { margin-left: auto; width: 15px; border-left: 1px solid #ddd; display: flex; flex-direction: column; background: #f4f4f5; }
.gs { flex: 1; display: flex; align-items: center; justify-content: center; border-bottom: 1px solid #aaa; }
.gs.more { border-bottom: 0; }
.gs i { width: 0; height: 0; border: 4px solid transparent; }
.gs.up i { border-bottom-color: #bbb; margin-top: -4px; }
.gs.down i { border-top-color: #555; margin-top: 4px; }
.gs.more i { border-top-color: #555; margin-top: 4px; }
.c-add { width: 83px; border-right: 0; }
.c-tile { width: 132px; padding-left: 6px; }
.c-tile .ritem svg { margin-right: 5px; }
.c-prop { width: 120px; padding-left: 16px; border-right: 0; }

/* workspace */
.workspace { flex: none; height: 807px; display: flex; padding-top: 2px; box-sizing: border-box; border-top: 1px solid #d4d4d6; }
.leftcol { width: 239px; flex: none; display: flex; flex-direction: column; margin-right: 5px; }
.panel { box-sizing: border-box; border-right: 1px solid #bcbcbe; border-top: 1px solid #bcbcbe; border-bottom: 1px solid #bcbcbe; }
.p-workspace { height: 398px; }
.p-layers { height: 400px; margin-top: 5px; }
.panel-head { height: 92px; display: flex; align-items: flex-start; border-bottom: 1px solid #bbb; margin-right: 2px; position: relative; }
.panel-head.short { height: 46px; border-bottom: 0; margin-right: 0; }
.panel-title { font-size: 19px; color: #444; line-height: 28px; white-space: nowrap; }
.wm-title { margin-left: -79px; margin-top: 10px; }
.lm-title { margin-left: -76px; margin-top: 10px; }
.pin { position: absolute; left: 192px; top: 17px; }
.close { position: absolute; left: 212px; top: 13px; font-size: 12px; color: #222; }
.pin.dim { top: 18px; }
.close.dim { color: #666; top: 14px; }

.mini-toolbar { background: #fff; display: flex; align-items: center; box-sizing: border-box; }
.wm-tools { width: 224px; height: 27px; margin-top: 10px; }
.find-hint { color: #aaa; font-size: 13px; white-space: nowrap; }
.cut-ic { margin-right: 1px; }
.wm-tools .find-hint { margin-left: 10px; width: 94px; }
.arrowbtn { width: 16px; height: 16px; border: 1px solid #aaa; background: #f2f4f6; margin-right: 6px; display: flex; align-items: center; justify-content: center; }
.arrowbtn .up { width: 0; height: 0; border: 5px solid transparent; border-bottom: 5px solid #6d8fae; margin-top: -5px; }
.arrowbtn .dn { width: 0; height: 0; border: 5px solid transparent; border-top: 5px solid #6d8fae; margin-top: 5px; }

.treebox { background: #fff; border: 1px solid #777; box-sizing: border-box; border-left: 0; overflow: hidden; position: relative; }
.wm-tree { width: 225px; height: 252px; display: flex; }
.treerows { flex: 1; overflow: hidden; margin-top: -1px; }
.trow { height: 20px; line-height: 20px; white-space: nowrap; display: flex; align-items: center; font-size: 13px; flex: none; }
.clip28 { margin-left: -28px; }
.clip2 { margin-left: -2px; }
.clip14 { margin-left: -4px; }
.ds-ic { margin-left: -2px; margin-right: 1px; }
.child { padding-left: 3px; }
.dots { width: 12px; height: 20px; border-left: 1px dotted #777; box-sizing: border-box; position: relative; }
.dots::after { content: ""; position: absolute; left: 0; top: 10px; width: 11px; border-top: 1px dotted #777; }
.dots.end { height: 10px; margin-bottom: 10px; }
.bullet { width: 7px; height: 7px; border-radius: 50%; background: #4a70ad; margin: 0 13px 0 7px; }
.line-ic { margin: 0 5px 0 1px; }
.sel { background: #0072c6; color: #fff; padding: 0 2px; margin-left: -2px; }
.vscroll { width: 20px; flex: none; display: flex; flex-direction: column; background: #f2f2f2; }
.chev { height: 21px; display: flex; align-items: center; justify-content: center; }
.thumb { height: 180px; background: #c8c8c8; margin-bottom: auto; }

.lm-tools { width: 226px; height: 39px; padding-top: 1px; position: relative; }
.doc-ic { margin-right: 3px; }
.grid-ic { margin-left: 5px; }
.tool-sep { width: 1px; height: 32px; background: #bbb; margin: 0 6px 0 6px; }
.lm-tools .find-hint { margin-left: 9px; width: 103px; }
.overflow-btn { position: absolute; right: -10px; top: 29px; width: 9px; height: 9px; background: linear-gradient(#555 0 1px, transparent 1px 3px, #555 3px 4px, transparent 4px), #ddd; }
.lm-tree { width: 237px; height: 309px; padding-top: 1px; }
.layer-row { height: 20px; display: flex; align-items: center; font-size: 13px; }
.hl { background: #c2c2c2; padding: 0 2px; line-height: 20px; color: #333; }
.pad { padding: 0 2px; }
.float-ball { position: absolute; left: -29px; top: 117px; width: 34px; height: 34px; border-radius: 50%; background: #ddd6f5; }

/* document */
.doccol { width: 1209px; flex: none; display: flex; flex-direction: column; }
.doctabs { height: 30px; display: flex; border-bottom: 3px solid #a8a8aa; position: relative; padding-left: 1px; flex: none; }
.doctab { width: 130px; box-sizing: border-box; background: #a9a9ab; color: #f1f1f1; display: flex; align-items: center; padding-left: 14px; font-size: 13px; }
.doctab .x { margin-left: 16px; font-size: 15px; color: #eee; }
.doc-car { position: absolute; right: 11px; top: 8px; }
.map { height: 731px; margin-left: 1px; width: 1206px; box-sizing: border-box; background: #fff; border: 1px solid #666; position: relative; overflow: hidden; flex: none; }
.watermark {
    position: absolute;
    right: 12px;
    bottom: 1px;
    text-align: center;
    color: #f3f3f6;
    font: italic bold 21px/23px "DejaVu Serif", serif;
    letter-spacing: 1px;
    text-shadow: 1px 1px 0 #e9e9ed;
}

/* status bar */
.statusbar {
    height: 36px;
    margin-top: 1px;
    margin-left: 1px;
    width: 1207px;
    box-sizing: border-box;
    border: 1px solid #bbb;
    border-top: 0;
    display: flex;
    align-items: center;
    font-size: 13px;
    white-space: nowrap;
    flex: none;
}
.st-cell { height: 100%; display: flex; align-items: center; box-sizing: border-box; border-right: 1px solid #d0d0d2; flex: none; }
.st-count { width: 97px; padding-left: 8px; }
.st-scale { width: 71px; padding-left: 10px; }
.combo { margin-left: 5px; width: 175px; height: 25px; box-sizing: border-box; border: 1px solid #aaa; background: #fff; display: flex; flex: none; }
.combo-text { padding-left: 4px; line-height: 23px; flex: 1; }
.combo-btn { width: 20px; border-left: 1px solid #ccc; background: #f2f2f2; display: flex; align-items: center; justify-content: center; }
.swap { margin-left: 14px; }
.field { height: 25px; box-sizing: border-box; border: 1px solid #aaa; line-height: 23px; padding-left: 4px; overflow: hidden; flex: none; }
.f-coord { margin-left: 15px; width: 192px; background: #efefef; }
.f-crs { margin-left: 10px; width: 192px; background: #efefef; }
.st-center { width: 75px; padding-left: 16px; }
.f-num { background: #fff; width: 90px; }
.f-x { margin-left: 6px; }
.f-y { margin-left: 10px; }
.copy { margin-left: 11px; }
.paste { margin-left: 13px; }
.st-sep { width: 1px; height: 30px; background: #d0d0d2; margin-left: 11px; }
.mark { margin-left: 12px; }
.st-car { margin-left: 16px; }

/* catalog panel */
.rightcol { margin-left: 4px; width: 290px; flex: none; box-sizing: border-box; border-left: 1px solid #bcbcbe; border-top: 1px solid #bcbcbe; border-bottom: 1px solid #bcbcbe; height: 801px; display: flex; flex-direction: column; }
.cat-title { padding-left: 15px; margin-top: 9px; height: 36px; font-size: 18.500px; flex: none; }
.cat-tools { height: 47px; margin-left: 2px; background: #fff; display: flex; align-items: center; flex: none; padding-left: 6px; }
.cat-tools svg { margin-right: 10px; }
.cat-sep { width: 1px; height: 40px; background: #bbb; margin: 0 1px 0 0; }
.cat-search { width: 250px; height: 25px; box-sizing: border-box; border: 1px solid #666; padding-left: 4px; color: #aaa; line-height: 23px; }
.cat-tree { margin-left: 9px; margin-top: 5px; height: 636px; flex: none; border: 1px solid #b4b4b6; border-right: 0; background: #fff; box-sizing: border-box; overflow: hidden; white-space: nowrap; }
.crow { height: 36.200px; display: flex; align-items: center; flex: none; }
.crow svg { margin-right: 5px; }
.crow .big { font-size: 14px; }
.tw { width: 0; height: 0; margin-right: 4px; border-left: 5px solid #666; border-top: 4px solid transparent; border-bottom: 4px solid transparent; }
.tw.open { border-left: 0; border-top: 0; border-bottom: 7px solid #777; border-left: 7px solid transparent; }
.crow.top { padding-left: 8px; }
.crow.top .tw:not(.open) { margin-right: 6px; }
.crow.l2 { padding-left: 27px; }
.crow.l3 { padding-left: 54px; }
.crow.l3 svg { margin-right: 7px; }
.crow.more span { padding-left: 25px; }
.hl-row { background: linear-gradient(to right, #fff 0 39px, #d8d8da 39px); }
.cat-bottom { display: flex; margin-left: 2px; height: 36px; margin-top: 28px; border-top: 1px solid #bbb; align-items: stretch; font-size: 13.500px; flex: none; }
.btab { padding: 0 10px; display: flex; align-items: center; }
.btab.on { background: #d9d9db; margin-bottom: 2px; }

/* task manager strip and windows taskbar */
.taskmgr { height: 30px; flex: none; display: flex; align-items: center; overflow: hidden; font-size: 14px; }
.taskmgr span { margin-left: -5px; margin-top: 1px; }
.taskbar { height: 50px; flex: none; background: #d1d1d3; display: flex; align-items: center; position: relative; }
.ts-search { width: 393px; height: 50px; box-sizing: border-box; background: #fff; padding-left: 14px; line-height: 48px; font-size: 19px; color: #444; flex: none; }
.ts-cortana { width: 13px; height: 13px; border: 3.500px solid #111; border-radius: 50%; margin-left: 22px; flex: none; }
.ts-view { margin-left: 39px; }
.ts-mon { margin-left: 40px; }
.ts-edge { margin-left: 33px; }
.ts-folder { margin-left: 32px; }
.ts-active { width: 62px; height: 50px; box-sizing: border-box; margin-left: 16px; background: #ebebed; border-bottom: 3px solid #1471bd; display: flex; align-items: center; justify-content: center; }
.ts-tray { margin-left: auto; display: flex; align-items: center; white-space: nowrap; flex: none; width: 483px; box-sizing: border-box; overflow: hidden; }
.tr-name { font-size: 18px; color: #222; margin-left: 10px; }
.tr-pct { font-size: 18px; color: #b1423c; margin-left: 12px; }
.tr-caret { margin-left: 32px; }
.tr-shield { margin-left: 12px; }
.tr-mic { margin-left: 11px; }
.tr-bat { margin-left: 15px; }
.tr-wifi { margin-left: 13px; }
.tr-vol { margin-left: 12px; }
.tr-ime { margin-left: 13px; font-size: 19px; color: #111; }
.tr-clock { display: flex; flex-direction: column; align-items: center; margin-left: 10px; width: 80px; font-size: 14px; line-height: 22px; color: #222; flex: none; }
```
